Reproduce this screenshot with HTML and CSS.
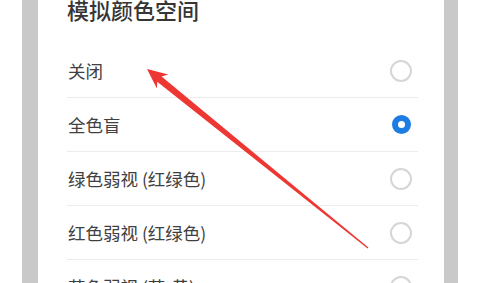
FILE: index.html
```html
<!DOCTYPE html>
<html lang="zh-CN">
<head>
<meta charset="utf-8">
<title>模拟颜色空间</title>
<link rel="stylesheet" href="styles.css">
</head>
<body>
<div class="screen">
  <div class="edge"></div>
  <div class="strip strip-left"></div>
  <div class="dialog">
    <div class="title">模拟颜色空间</div>
    <ul class="options">
      <li class="option"><span class="label">关闭</span><span class="radio"></span></li>
      <li class="option"><span class="label">全色盲</span><span class="radio checked"></span></li>
      <li class="option"><span class="label">绿色弱视 (红绿色)</span><span class="radio"></span></li>
      <li class="option"><span class="label">红色弱视 (红绿色)</span><span class="radio"></span></li>
      <li class="option"><span class="label">蓝色弱视 (蓝-黄)</span><span class="radio"></span></li>
    </ul>
  </div>
  <div class="strip strip-right"></div>
  <div class="edge"></div>
</div>
<svg class="arrow" width="480" height="283" viewBox="0 0 480 283">
  <polygon points="147,69 168.3,74.6 161.6,76.4 368.4,247.5 367.6,248.5 157.2,81.8 156.9,88.6" fill="#ee3733"/>
</svg>
</body>
</html>
```
FILE: styles.css
```css
html, body {
  margin: 0;
  padding: 0;
  width: 480px;
  height: 283px;
  overflow: hidden;
  background: #ffffff;
}
.screen {
  display: flex;
  width: 480px;
  height: 283px;
  font-family: "Noto Sans CJK SC", "Noto Sans", sans-serif;
}
.edge {
  width: 22px;
  background: #ffffff;
}
.strip-left {
  width: 16px;
  background: #c9c9c9;
}
.strip-right {
  width: 14px;
  background: #c9c9c9;
}
.dialog {
  flex: 1;
  background: #ffffff;
  padding-left: 29px;
  padding-right: 26px;
}
.title {
  height: 22px;
  line-height: 22px;
  font-size: 22px;
  color: #363636;
  font-weight: 500;
  margin-top: -2px;
  margin-bottom: 24px;
}
.options {
  list-style: none;
  margin: 0;
  padding: 0;
}
.option {
  display: flex;
  align-items: center;
  justify-content: space-between;
  height: 53px;
  border-bottom: 1px solid #ececec;
  padding-right: 6px;
  padding-left: 1px;
}
.label {
  font-size: 17.5px;
  color: #404040;
}
.radio {
  width: 18px;
  height: 18px;
  border: 2px solid #d6d6d6;
  border-radius: 50%;
  box-sizing: content-box;
}
.radio.checked {
  width: 7px;
  height: 7px;
  border: 6px solid #1f7ce2;
  margin-right: 1px;
}
.arrow {
  position: absolute;
  left: 0;
  top: 0;
}
```
